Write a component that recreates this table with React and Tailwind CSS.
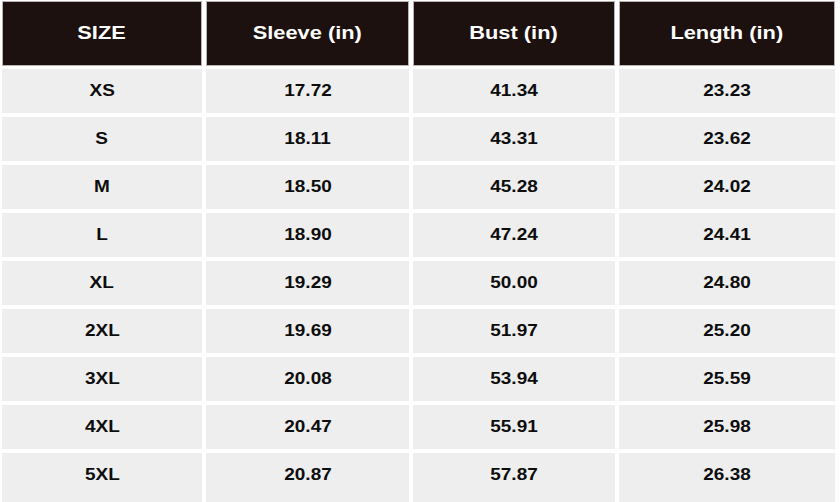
import React from "react";

const headers = ["SIZE", "Sleeve (in)", "Bust (in)", "Length (in)"];
const rows = [
  ["XS", "17.72", "41.34", "23.23"],
  ["S", "18.11", "43.31", "23.62"],
  ["M", "18.50", "45.28", "24.02"],
  ["L", "18.90", "47.24", "24.41"],
  ["XL", "19.29", "50.00", "24.80"],
  ["2XL", "19.69", "51.97", "25.20"],
  ["3XL", "20.08", "53.94", "25.59"],
  ["4XL", "20.47", "55.91", "25.98"],
  ["5XL", "20.87", "57.87", "26.38"],
];

export default function App() {
  return (
    <div
      className="w-[840px] h-[502px] overflow-hidden bg-white pt-[1px] pl-[2px] flex flex-col"
      style={{ fontFamily: '"Liberation Sans", Arial, sans-serif' }}
    >
      <div className="grid grid-cols-[200px_203px_202px_216px] gap-x-[4px] h-[65px] shrink-0">
        {headers.map((h) => (
          <div
            key={h}
            className="bg-[#1c110e] border border-[#b8b2b0] flex items-center justify-center"
          >
            <span className="text-white font-bold text-[18.5px] leading-none scale-x-[1.18] whitespace-nowrap">
              {h}
            </span>
          </div>
        ))}
      </div>
      <div className="mt-[3px] flex flex-col gap-[4px]">
        {rows.map((r, i) => (
          <div
            key={r[0]}
            className={
              i === rows.length - 1
                ? "grid grid-cols-[200px_203px_202px_216px] gap-x-[4px] h-[49px] shrink-0"
                : "grid grid-cols-[200px_203px_202px_216px] gap-x-[4px] h-[44px] shrink-0"
            }
          >
            {r.map((c, j) => (
              <div
                key={j}
                className={
                  i === rows.length - 1
                    ? "bg-[#eeeeee] flex items-center justify-center pb-[5px]"
                    : "bg-[#eeeeee] flex items-center justify-center"
                }
              >
                <span className="text-[#0d0d0d] font-bold text-[16.8px] leading-none scale-x-[1.13] whitespace-nowrap">
                  {c}
                </span>
              </div>
            ))}
          </div>
        ))}
      </div>
    </div>
  );
}
